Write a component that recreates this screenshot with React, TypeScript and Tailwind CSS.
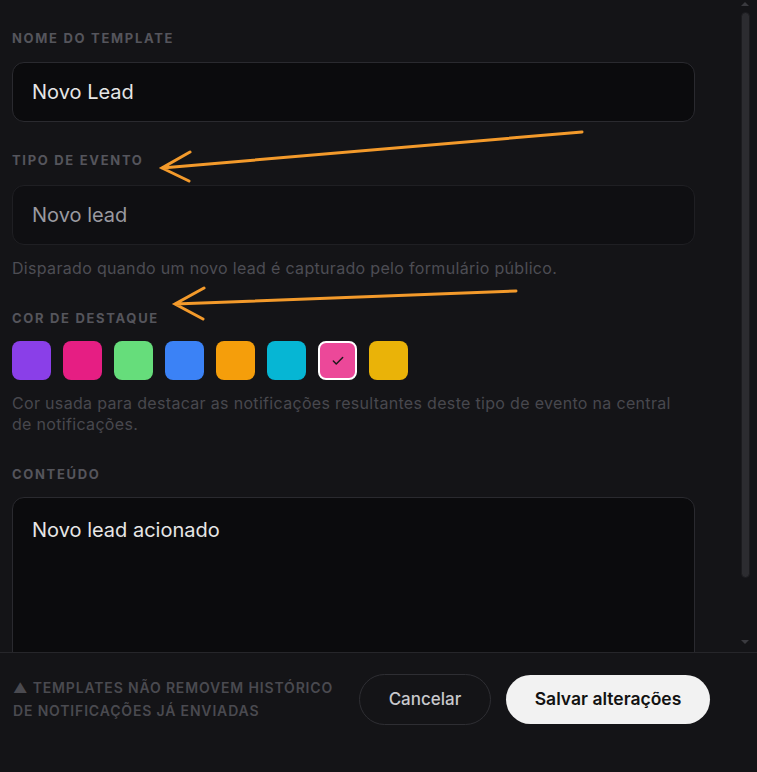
import { Check } from "lucide-react";

const swatches = [
  "bg-[#8a3fe8]",
  "bg-[#e61e83]",
  "bg-[#66dd7b]",
  "bg-[#3b82f6]",
  "bg-[#f59e0b]",
  "bg-[#06b6d4]",
  "bg-[#ec4899]",
  "bg-[#eab308]",
];

const Label = ({ children }: { children: React.ReactNode }) => (
  <div className="text-[13px] leading-[16px] font-bold tracking-[0.13em] text-[#55555c] uppercase">
    {children}
  </div>
);

const App = () => {
  const selected = 6;

  return (
    <div className="relative w-[757px] h-[772px] bg-[#141417] overflow-hidden font-['Inter',sans-serif]">
      <div className="relative h-[652px] overflow-hidden">
        <div className="pl-[12px] pr-[62px] pt-[30px]">
          <Label>Nome do template</Label>
          <div className="mt-[16px] h-[60px] rounded-[12px] border border-[#2a2a2f] bg-[#0b0b0d] px-[19px] flex items-center text-[20px] text-[#e6e6e6]">
            Novo Lead
          </div>

          <div className="mt-[30px]">
            <Label>Tipo de evento</Label>
          </div>
          <div className="mt-[17px] h-[60px] rounded-[12px] border border-[#1f1f23] bg-[#0f0f12] px-[19px] flex items-center text-[20px] text-[#9a9aa0]">
            Novo lead
          </div>
          <p className="mt-[13px] text-[16px] leading-[20px] tracking-[0.02em] text-[#4d4d54]">
            Disparado quando um novo lead é capturado pelo formulário público.
          </p>

          <div className="mt-[32px]">
            <Label>Cor de destaque</Label>
          </div>
          <div className="mt-[15px] flex gap-[12px]">
            {swatches.map((c, i) => (
              <div
                key={c}
                className={`w-[39px] h-[39px] rounded-[8px] flex items-center justify-center ${c} ${
                  i === selected ? "border-2 border-white" : ""
                }`}
              >
                {i === selected && <Check size={14} strokeWidth={2.5} className="text-[#1a1a1a]" />}
              </div>
            ))}
          </div>
          <p className="mt-[13px] text-[16px] leading-[21px] tracking-[0.02em] text-[#48484e]">
            Cor usada para destacar as notificações resultantes deste tipo de evento na central de notificações.
          </p>

          <div className="mt-[31px]">
            <Label>Conteúdo</Label>
          </div>
          <div className="mt-[15px] h-[200px] rounded-t-[12px] border border-[#2a2a2f] bg-[#0b0b0d] px-[19px] pt-[17px] text-[20px] text-[#e6e6e6]">
            Novo lead acionado
          </div>
        </div>

        {/* scrollbar */}
        <div className="absolute top-0 right-[5px] w-[14px] h-full">
          <div className="absolute top-[2px] left-[3px] w-0 h-0 border-l-[4px] border-r-[4px] border-b-[4px] border-l-transparent border-r-transparent border-b-[#3a3a3f]" />
          <div className="absolute top-[12px] left-[3px] w-[9px] h-[566px] rounded-full bg-[#2c2c30] border border-[#1c1c1f]" />
          <div className="absolute bottom-[8px] left-[3px] w-0 h-0 border-l-[4px] border-r-[4px] border-t-[4px] border-l-transparent border-r-transparent border-t-[#3a3a3f]" />
        </div>
      </div>

      <div className="border-t border-[#26262a] flex items-start pl-[13px] pr-[47px] pt-[21px]">
        <div className="flex-1 pt-[2px] text-[14px] leading-[23px] font-semibold tracking-[0.06em] text-[#4a4a50] uppercase">
          ▲ Templates não removem histórico
          <br />
          de notificações já enviadas
        </div>
        <div className="flex items-center gap-[15px]">
          <button className="h-[51px] w-[132px] rounded-full border border-[#2e2e33] text-[17px] font-medium text-[#c8c8cc]">
            Cancelar
          </button>
          <button className="h-[49px] w-[204px] rounded-full bg-[#f2f2f2] text-[17.5px] font-semibold text-[#121212]">
            Salvar alterações
          </button>
        </div>
      </div>

      {/* annotation arrows */}
      <svg className="absolute inset-0 pointer-events-none" width="757" height="772">
        <g stroke="#f39a2b" strokeWidth="3" strokeLinecap="round" fill="none">
          <path d="M582 132 L162 168 M190 152 L162 168 L189 181" />
          <path d="M516 291 L175 304 M204 288 L175 304 L203 319" />
        </g>
      </svg>
    </div>
  );
};

export default App;
